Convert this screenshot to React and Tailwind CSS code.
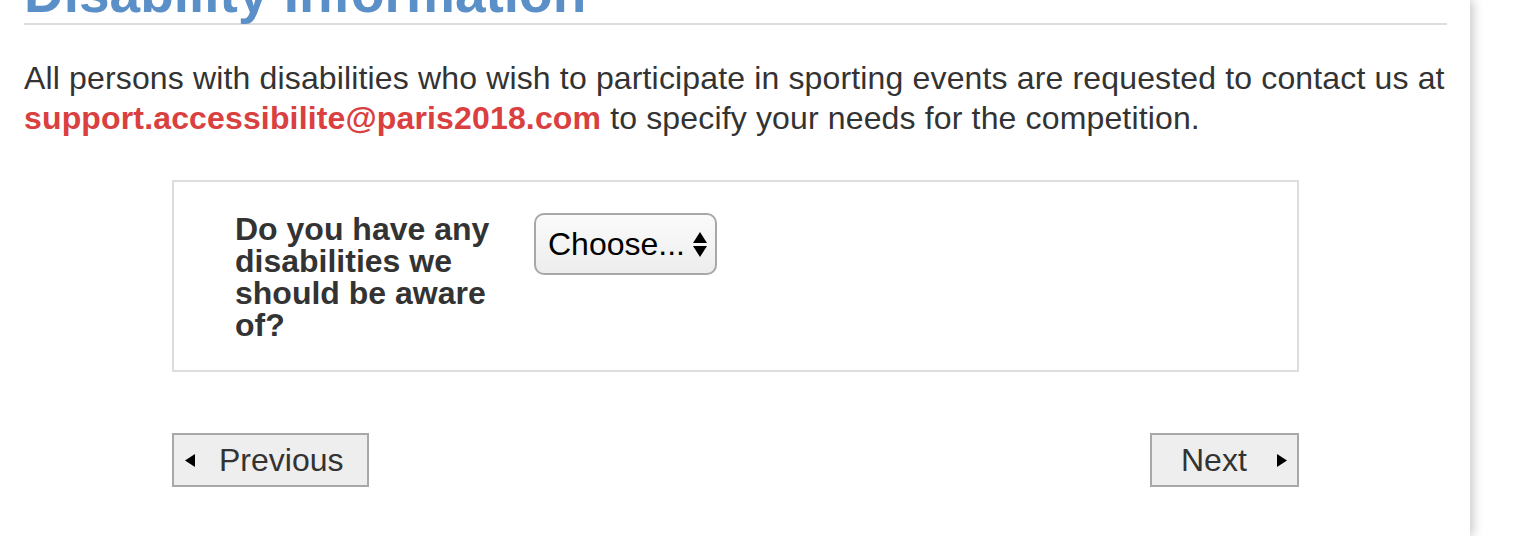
export default function App() {
  const font = { fontFamily: '"Liberation Sans", Arial, Helvetica, sans-serif' };
  return (
    <div className="h-[536px] w-[1524px] overflow-hidden bg-white" style={font}>
      <div className="h-full w-[1470px] bg-white shadow-[3px_0_10px_rgba(0,0,0,0.22)] pl-[24px] pr-[23px] overflow-hidden">
        <h1 className="mt-[-35px] text-[55px] leading-[56px] font-bold text-[#5b8fc7] pb-[2px] border-b-2 border-[#dddddd]">
          Disability Information
        </h1>
        <p className="mt-[33px] text-[32px] leading-[40px] tracking-[0.15px] text-[#333333]">
          All persons with disabilities who wish to participate in sporting events are requested to contact us at{" "}
          <span className="font-bold text-[#d9403f]">support.accessibilite@paris2018.com</span> to specify your needs for the competition.
        </p>
        <div className="ml-[148px] mt-[42px] w-[1127px]">
          <div className="border-2 border-[#dddddd] pt-[31px] pb-[29px] pl-[61px] flex items-start gap-[19px]">
            <div className="w-[280px] text-[32px] leading-[32px] font-bold text-[#333333]">
              Do you have any disabilities we should be aware of?
            </div>
            <div className="h-[62px] w-[183px] rounded-[10px] border-2 border-[#a8a8a8] bg-gradient-to-b from-[#fbfbfb] to-[#ededed] flex items-center pl-[12px] pr-[8px]">
              <span className="text-[32px] leading-none text-black">Choose...</span>
              <span className="ml-auto flex flex-col items-center gap-[3px]">
                <svg width="14" height="11" viewBox="0 0 14 11"><polygon points="7,0 14,11 0,11" fill="#000" /></svg>
                <svg width="14" height="11" viewBox="0 0 14 11"><polygon points="0,0 14,0 7,11" fill="#000" /></svg>
              </span>
            </div>
          </div>
          <div className="mt-[61px] flex justify-between">
            <button className="h-[54px] w-[197px] border-2 border-[#a8a8a8] bg-[#eeeeee] flex items-center pl-[11px] text-[32px] text-[#333333]">
              <svg width="10" height="13" viewBox="0 0 10 13"><polygon points="10,0 10,13 0,6.5" fill="#000" /></svg>
              <span className="ml-[24px]">Previous</span>
            </button>
            <button className="h-[54px] w-[149px] border-2 border-[#a8a8a8] bg-[#eeeeee] flex items-center pl-[29px] text-[32px] text-[#333333]">
              <span>Next</span>
              <svg width="10" height="13" viewBox="0 0 10 13" className="ml-[30px]"><polygon points="0,0 10,6.5 0,13" fill="#000" /></svg>
            </button>
          </div>
        </div>
      </div>
    </div>
  );
}
